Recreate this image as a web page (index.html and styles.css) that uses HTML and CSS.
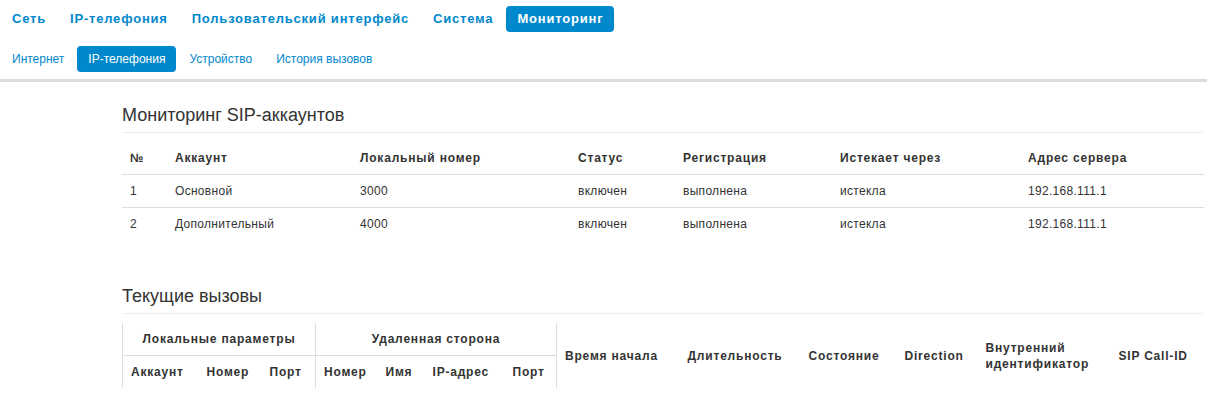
FILE: index.html
```html
<!DOCTYPE html>
<html lang="ru">
<head>
    <meta charset="UTF-8">
    <meta name="viewport" content="width=device-width, initial-scale=1.0">
    <link rel="stylesheet" href="styles.css">
</head>
<body>
    <div class="header">
        <ul class="nav nav-main">
            <li><a href="#">Сеть</a></li>
            <li><a href="#">IP-телефония</a></li>
            <li><a href="#">Пользовательский интерфейс</a></li>
            <li><a href="#">Система</a></li>
            <li class="active"><a href="#">Мониторинг</a></li>
        </ul>
        <ul class="nav nav-sub">
            <li><a href="#">Интернет</a></li>
            <li class="active"><a href="#">IP-телефония</a></li>
            <li><a href="#">Устройство</a></li>
            <li><a href="#">История вызовов</a></li>
        </ul>
    </div>

    <div class="content">
        <h3 class="page-header">Мониторинг SIP-аккаунтов</h3>
        <table class="table accounts">
            <colgroup>
                <col style="width: 45px">
                <col style="width: 185px">
                <col style="width: 218px">
                <col style="width: 105px">
                <col style="width: 157px">
                <col style="width: 188px">
                <col>
            </colgroup>
            <thead>
                <tr>
                    <th>№</th>
                    <th>Аккаунт</th>
                    <th>Локальный номер</th>
                    <th>Статус</th>
                    <th>Регистрация</th>
                    <th>Истекает через</th>
                    <th>Адрес сервера</th>
                </tr>
            </thead>
            <tbody>
                <tr>
                    <td>1</td>
                    <td>Основной</td>
                    <td>3000</td>
                    <td>включен</td>
                    <td>выполнена</td>
                    <td>истекла</td>
                    <td>192.168.111.1</td>
                </tr>
                <tr>
                    <td>2</td>
                    <td>Дополнительный</td>
                    <td>4000</td>
                    <td>включен</td>
                    <td>выполнена</td>
                    <td>истекла</td>
                    <td>192.168.111.1</td>
                </tr>
            </tbody>
        </table>

        <h3 class="page-header calls-title">Текущие вызовы</h3>
        <table class="table calls">
            <colgroup>
                <col style="width: 76px">
                <col style="width: 63px">
                <col style="width: 54px">
                <col style="width: 62px">
                <col style="width: 47px">
                <col style="width: 80px">
                <col style="width: 52px">
                <col style="width: 123px">
                <col style="width: 121px">
                <col style="width: 96px">
                <col style="width: 81px">
                <col style="width: 133px">
                <col>
            </colgroup>
            <thead>
                <tr>
                    <th colspan="3" class="group first">Локальные параметры</th>
                    <th colspan="4" class="group">Удаленная сторона</th>
                    <th rowspan="2" class="mid">Время начала</th>
                    <th rowspan="2" class="mid">Длительность</th>
                    <th rowspan="2" class="mid">Состояние</th>
                    <th rowspan="2" class="mid">Direction</th>
                    <th rowspan="2" class="mid">Внутренний идентификатор</th>
                    <th rowspan="2" class="mid">SIP Call-ID</th>
                </tr>
                <tr>
                    <th class="first">Аккаунт</th>
                    <th>Номер</th>
                    <th class="last">Порт</th>
                    <th>Номер</th>
                    <th>Имя</th>
                    <th>IP-адрес</th>
                    <th class="last">Порт</th>
                </tr>
            </thead>
            <tbody></tbody>
        </table>
    </div>
</body>
</html>
```

FILE: styles.css
```css
body {
    margin: 0;
    font-family: "Liberation Sans", Arial, Helvetica, sans-serif;
    font-size: 12px;
    color: #333;
    background: #fff;
}

/* top navigation */
.header {
    border-bottom: 3px solid #dcdcdc;
    padding: 6px 0 7px 1px;
}
.nav {
    list-style: none;
    margin: 0;
    padding: 0;
    display: flex;
    gap: 2px;
}
.nav a {
    display: block;
    padding: 6px 11px;
    line-height: 14px;
    color: #0088cc;
    text-decoration: none;
    border-radius: 4px;
}
.nav .active a {
    background: #0088cc;
    color: #fff;
}
.nav-main a {
    font-size: 13px;
    font-weight: bold;
    letter-spacing: 0.8px;
}
.nav-sub {
    margin-top: 14px;
}
.nav-sub a {
    font-size: 12px;
}

/* page body */
.content {
    padding: 23px 3px 20px 122px;
}
.page-header {
    margin: 0;
    font-size: 18px;
    font-weight: normal;
    line-height: 20px;
    padding-bottom: 7px;
    border-bottom: 1px solid #eee;
}
.calls-title {
    margin-top: 46px;
}

.table {
    width: 100%;
    margin-top: 9px;
    border-collapse: collapse;
    table-layout: fixed;
}
.table th,
.table td {
    padding: 8px;
    line-height: 16px;
    text-align: left;
    vertical-align: top;
}
.table th {
    font-weight: bold;
    letter-spacing: 0.8px;
}
.table td {
    letter-spacing: 0.3px;
}
.accounts thead th {
    border-bottom: 1px solid #ddd;
}
.accounts tbody tr + tr td {
    border-top: 1px solid #ddd;
}

/* grouped header of the calls table */
.calls th.group {
    text-align: center;
    border-right: 1px solid #ddd;
    border-bottom: 1px solid #ddd;
}
.calls th.first {
    border-left: 1px solid #ddd;
}
.calls th.last {
    border-right: 1px solid #ddd;
}
.calls th.mid {
    vertical-align: middle;
}
```
